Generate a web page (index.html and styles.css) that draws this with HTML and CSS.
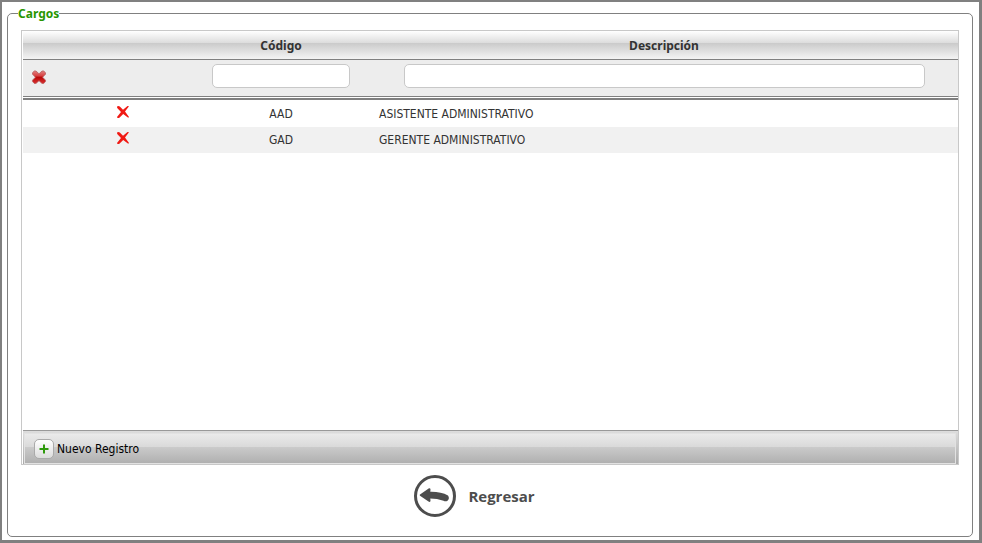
FILE: index.html
```html
<!DOCTYPE html>
<html lang="es">
<head>
	<meta charset="utf-8">
	<title>Cargos</title>
	<link rel="stylesheet" href="styles.css">
</head>
<body>
	<fieldset class="panel">
		<legend>Cargos</legend>
		<div class="grid">
			<div class="grid-body">
				<table>
					<colgroup>
						<col class="col-accion">
						<col class="col-codigo">
						<col>
					</colgroup>
					<thead>
						<tr class="titulos">
							<th></th>
							<th>Código</th>
							<th>Descripción</th>
						</tr>
						<tr class="filtros">
							<td>
								<button type="button" class="icono" aria-label="Limpiar filtros">
									<svg width="16" height="16" viewBox="0 0 16 16">
										<defs>
											<linearGradient id="rojo" x1="0" y1="0" x2="0" y2="1">
												<stop offset="0" stop-color="#e08080"/>
												<stop offset="0.4" stop-color="#d84040"/>
												<stop offset="0.5" stop-color="#b80808"/>
												<stop offset="1" stop-color="#d83030"/>
											</linearGradient>
										</defs>
										<path d="M3.3 2L5 2L8 4.8L11 2L12.7 2L14.5 3.7L14.5 5.2L11.6 8.2L14.5 11.2L14.5 12.6L12.7 14.4L11 14.4L8 11.7L5 14.4L3.3 14.4L1.5 12.6L1.5 11.2L4.4 8.2L1.5 5.2L1.5 3.7Z" fill="url(#rojo)" stroke="#b86060" stroke-width="0.8" stroke-linejoin="round"/>
									</svg>
								</button>
							</td>
							<td><input type="text" class="filtro-codigo" aria-label="Código"></td>
							<td><input type="text" class="filtro-descripcion" aria-label="Descripción"></td>
						</tr>
					</thead>
					<tbody>
						<tr>
							<td class="accion">
								<button type="button" class="icono" aria-label="Eliminar AAD">
									<svg width="14" height="14" viewBox="0 0 14 14">
										<path d="M1 1.6C2 .6 3 .8 3.8 1.6L7 4.8L11.5 1L13 1.2L9 6.6L13 12L12.2 12.8L7.2 9L3.4 12.8C2.4 13.4 1 13 1 12L5 7L1.2 3Z" fill="#f01a14"/>
									</svg>
								</button>
							</td>
							<td class="codigo">AAD</td>
							<td class="descripcion">ASISTENTE ADMINISTRATIVO</td>
						</tr>
						<tr>
							<td class="accion">
								<button type="button" class="icono" aria-label="Eliminar GAD">
									<svg width="14" height="14" viewBox="0 0 14 14">
										<path d="M1 1.6C2 .6 3 .8 3.8 1.6L7 4.8L11.5 1L13 1.2L9 6.6L13 12L12.2 12.8L7.2 9L3.4 12.8C2.4 13.4 1 13 1 12L5 7L1.2 3Z" fill="#f01a14"/>
									</svg>
								</button>
							</td>
							<td class="codigo">GAD</td>
							<td class="descripcion">GERENTE ADMINISTRATIVO</td>
						</tr>
					</tbody>
				</table>
			</div>
			<div class="grid-pie">
				<button type="button" class="nuevo">
					<span class="mas">
						<svg width="10" height="10" viewBox="0 0 10 10">
							<path d="M4 0.5H6V4H9.5V6H6V9.5H4V6H0.5V4H4Z" fill="#2f9a0c"/>
						</svg>
					</span>
					Nuevo Registro
				</button>
			</div>
		</div>
		<button type="button" class="regresar">
			<svg width="44" height="44" viewBox="0 0 44 44">
				<circle cx="22" cy="22" r="19.5" fill="#fff" stroke="#4d4d4d" stroke-width="3"/>
				<path d="M7 20.5L16 14.2Q17.5 14 17.5 15.5L17.3 17.8Q28 17.6 35 21.5Q37 24.5 34.5 26.8Q32.5 27.8 30.5 26.8Q24 24.4 17.3 24.4L17.5 27Q17 28.5 15.5 27.6L7 21.8Q6.3 21 7 20.5Z" fill="#4d4d4d"/>
			</svg>
			Regresar
		</button>
	</fieldset>
</body>
</html>
```
FILE: styles.css
```css
* {
	box-sizing: border-box;
}
body {
	display: flex;
	margin: 0;
	padding: 2px 6px 3px 5px;
	min-height: 100vh;
	border: solid #808080;
	border-width: 2px 3px 3px 2px;
	background: #fff;
	color: #333;
	font-family: "DejaVu Sans Condensed", "Noto Sans", sans-serif;
	font-size: 12px;
}
button {
	border: 0;
	padding: 0;
	background: none;
	font-family: inherit;
	cursor: pointer;
}
svg {
	display: block;
}
.panel {
	flex: 1;
	margin: 0;
	padding: 7px 10px 0;
	min-width: 0;
	border: 1px solid #808080;
	border-radius: 5px;
}
legend {
	padding: 0;
	color: #289600;
	font-family: "Noto Sans", sans-serif;
	font-weight: bold;
	line-height: 19px;
}
.grid {
	margin: 0 3px;
	padding-left: 1px;
	border: 1px solid #c8c8c8;
}
.grid-body {
	min-height: 399px;
}
table {
	width: 100%;
	table-layout: fixed;
	border-spacing: 0;
}
.col-accion {
	width: 169px;
}
.col-codigo {
	width: 178px;
}
th, td {
	padding: 0;
}
.titulos th {
	height: 29px;
	border-bottom: 1px solid #808080;
	background: linear-gradient(#fff, #dcdcdc 43%, #cacaca 43%, #f4f4f4);
	font-family: "Noto Sans", sans-serif;
}
.filtros td {
	height: 40px;
	padding-bottom: 6px;
	border-bottom: 2px solid #808080;
	background: linear-gradient(#ededed 36px, #808080 36px, #808080 37px, #fff 37px);
	text-align: center;
}
.filtros .icono {
	display: block;
	margin: 2px 0 0 8px;
}
.filtros input {
	display: block;
	margin: 0 auto;
	height: 24px;
	border: 1px solid #c8c8c8;
	border-radius: 5px;
	background: #fff;
}
.filtro-codigo {
	width: 138px;
}
.filtro-descripcion {
	width: calc(100% - 67px);
}
tbody td {
	height: 26px;
}
tbody tr:first-child td {
	border-top: 1px solid #fff;
	height: 27px;
}
tbody tr:nth-child(even) {
	background: #f1f1f1;
}
tbody .accion {
	padding: 0 0 4px 31px;
}
.accion .icono {
	display: block;
	margin: 0 auto;
}
.codigo {
	text-align: center;
}
.descripcion {
	padding-left: 9px;
}
.grid-pie {
	height: 34px;
	padding: 2px 2px 1px 1px;
	border-top: 1px solid #999;
	background: linear-gradient(#ddd, #aaa);
}
.nuevo {
	display: flex;
	align-items: center;
	gap: 3px;
	width: 100%;
	height: 31px;
	padding-left: 9px;
	border: 1px solid #e2e2e2;
	background: linear-gradient(#eaeaea, #d9d9d9 46%, #cacaca 46%, #b0b0b0);
	color: #000;
	font-size: 12px;
}
.mas {
	display: flex;
	align-items: center;
	justify-content: center;
	width: 20px;
	height: 20px;
	border: 1px solid #aaa;
	border-radius: 5px;
	background: linear-gradient(#fff, #dcdcdc);
}
.regresar {
	display: flex;
	align-items: center;
	gap: 11px;
	margin: 9px auto 0;
	padding-right: 32px;
	color: #4d4d4d;
	font-family: "Open Sans", sans-serif;
	font-size: 15px;
	font-weight: bold;
}
```
